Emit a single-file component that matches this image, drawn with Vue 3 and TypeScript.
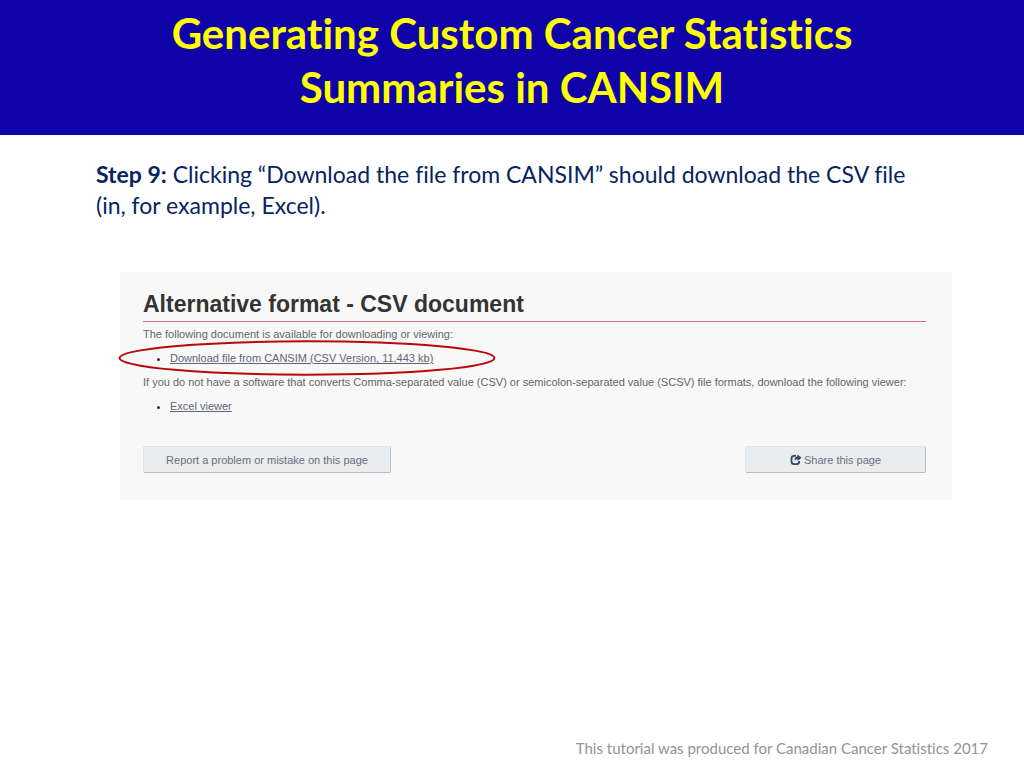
<script setup lang="ts">
const titleLines: string[] = ['Generating Custom Cancer Statistics', 'Summaries in CANSIM']
</script>

<template>
  <div class="slide">
    <header class="banner">
      <h1>
        <span v-for="line in titleLines" :key="line" class="title-line">{{ line }}</span>
      </h1>
    </header>

    <main class="content">
      <p class="step">
        <strong>Step 9:</strong> Clicking “Download the file from CANSIM” should download the CSV file
        (in, for example, Excel).
      </p>

      <section class="panel">
        <h2>Alternative format - CSV document</h2>
        <p>The following document is available for downloading or viewing:</p>
        <ul>
          <li>
            <a href="#download">Download file from CANSIM (CSV Version, 11,443 kb)</a>
            <svg class="highlight" viewBox="0 0 378 36" aria-hidden="true">
              <ellipse cx="189" cy="18" rx="187.5" ry="16.7" fill="none" stroke="#b80a0c" stroke-width="2" />
            </svg>
          </li>
        </ul>
        <p>
          If you do not have a software that converts Comma-separated value (CSV) or semicolon-separated
          value (SCSV) file formats, download the following viewer:
        </p>
        <ul>
          <li><a href="#viewer">Excel viewer</a></li>
        </ul>
        <div class="actions">
          <button type="button" class="report">Report a problem or mistake on this page</button>
          <button type="button" class="share">
            <svg class="share-icon" viewBox="0 0 12 12" aria-hidden="true">
              <path
                d="M6 1.8H4.2Q1.5 1.8 1.5 4.5V7.5Q1.5 10.2 4.2 10.2H6.5Q9.2 10.2 9.2 7.5V7"
                fill="none"
                stroke="#35435a"
                stroke-width="1.8"
              />
              <path d="M7.4 0.6L11.6 3.8L7.4 7V5.1Q5.6 5 4.8 7Q3.9 2.9 7.4 2.5Z" fill="#35435a" />
            </svg>
            Share this page
          </button>
        </div>
      </section>
    </main>

    <footer>This tutorial was produced for Canadian Cancer Statistics 2017</footer>
  </div>
</template>

<style>
body {
  margin: 0;
  background: #fff;
}
</style>

<style scoped>
.slide {
  display: flex;
  flex-direction: column;
  min-height: 100vh;
  font-family: Lato, "Open Sans", sans-serif;
  font-variant-ligatures: none;
}

.banner {
  padding: 6px 24px 21px;
  background: #0e02a8;
  color: #ffff00;
  text-align: center;
}

h1 {
  margin: 0;
  font-size: 42px;
  line-height: 54px;
  font-weight: 700;
}

.title-line {
  display: block;
}

.content {
  flex: 1;
  padding: 24px 72px 24px 96px;
}

.step {
  margin: 0 24px 51px 0;
  color: #062460;
  font-size: 23px;
  line-height: 31px;
}

.panel {
  margin-left: 24px;
  padding: 16px 26px 27px 23px;
  background: #f8f8f8;
  color: #666;
  font-family: "Liberation Sans", Arial, sans-serif;
  font-size: 11px;
  line-height: 24px;
}

h2 {
  margin: 0;
  border-bottom: 1px solid #d4747a;
  color: #333;
  font-size: 23px;
  line-height: 33px;
}

.panel p {
  margin: 0;
}

.panel ul {
  margin: 0;
  padding-left: 27px;
}

li {
  position: relative;
}

li::marker {
  color: #333;
}

a {
  color: #5f6672;
  text-decoration: underline;
}

.highlight {
  position: absolute;
  top: -6px;
  left: -52px;
  width: 378px;
  height: 36px;
}

.actions {
  display: flex;
  justify-content: space-between;
  margin-top: 28px;
}

button {
  display: flex;
  align-items: center;
  justify-content: center;
  gap: 2px;
  height: 27px;
  padding: 0 22px;
  border: 1px solid #e0e4e6;
  border-right-color: #b9bcc0;
  border-bottom-color: #b9bcc0;
  border-radius: 2px;
  background: #e9edef;
  color: #66707e;
  font-family: inherit;
  font-size: 11px;
}

.report {
  min-width: 248px;
}

.share {
  min-width: 181px;
}

.share-icon {
  width: 12px;
  height: 12px;
}

footer {
  padding: 0 36px 10px;
  color: #939393;
  font-size: 15px;
  line-height: 20px;
  text-align: right;
}
</style>
